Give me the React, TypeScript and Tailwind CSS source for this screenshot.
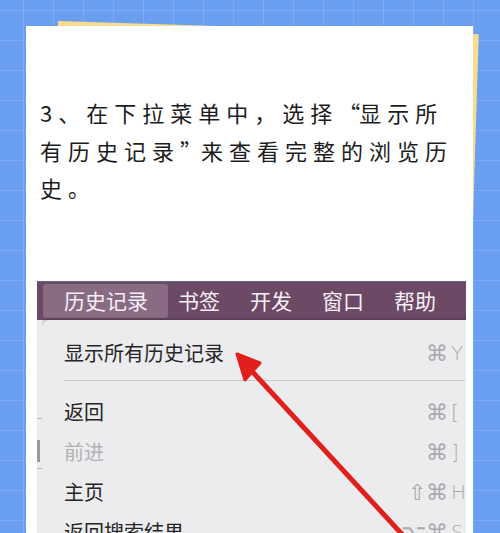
import React from 'react';

const cjk = "font-['Noto_Sans_CJK_SC',sans-serif]";

interface MenuRow {
  label: string;
  mods: string;
  key: string;
  dim?: boolean;
}

const rows: MenuRow[] = [
  { label: '返回', mods: '⌘', key: '[' },
  { label: '前进', mods: '⌘', key: ']', dim: true },
  { label: '主页', mods: '⇧⌘', key: 'H' },
  { label: '返回搜索结果', mods: '⌥⌘', key: 'S' },
];

const Shortcut: React.FC<{ mods: string; k: string }> = ({ mods, k }) => (
  <span className="ml-auto flex items-center font-['DejaVu_Sans',sans-serif] font-light text-[#a9a9ab]">
    <span className="text-[22px]">{mods}</span>
    <span className="w-[17px] pl-[3px] text-[20px]">{k}</span>
  </span>
);

export default function App() {
  return (
    <div className="relative h-[533px] w-[500px] overflow-hidden bg-[#699ef1] pl-[26px] pt-[26px] [background-image:linear-gradient(to_right,rgba(255,255,255,0.13)_1px,transparent_1px),linear-gradient(to_bottom,rgba(255,255,255,0.13)_1px,transparent_1px)] [background-size:30px_30px] [background-position:23px_10px]">
      {/* yellow sheet behind the card */}
      <div className="absolute left-[58px] top-[21px] h-[600px] w-[421px] origin-top-left rotate-[1.8deg] bg-[#f9dc8d]" />

      {/* card */}
      <div className="relative h-[600px] w-[447px] bg-white pl-[14px] pt-[68px]">
        <p className={`${cjk} w-[420px] text-[22px] leading-[37.5px] tracking-[6px] text-[#1c1c1c]`}>
          3、在下拉菜单中，选择<span className="tracking-[-1px]">“</span>显示所有历史记录<span className="tracking-[-1px]">”</span>来查看完整的浏览历史。
        </p>

        {/* screenshot */}
        <div className="relative -ml-[3px] mt-[74.5px] h-[260px] w-[429px] overflow-hidden bg-[#e6e6e8]">
          {/* menu bar */}
          <div className={`${cjk} flex h-[39px] items-center border-t border-[#5b6794] bg-[#6c4a66] pl-[6px] text-[21px] text-[#f6eff5]`}>
            <div className="flex h-[34px] w-[125px] items-center rounded-[3px] bg-[#896b84] pl-[21px]">历史记录</div>
            <span className="ml-[10px]">书签</span>
            <span className="ml-[30px]">开发</span>
            <span className="ml-[30px]">窗口</span>
            <span className="ml-[30px]">帮助</span>
          </div>

          <div className="flex">
            {/* page strip left of the menu */}
            <div className="relative w-[5px] bg-[#ececed]">
              <div className="absolute left-0 top-[98px] h-[1px] w-[5px] bg-[#b5b5b5]" />
              <div className="absolute left-0 top-[120px] h-[22px] w-[3px] bg-[#9a9a9a]" />
              <div className="absolute left-0 top-[148px] h-[1px] w-[5px] bg-[#b5b5b5]" />
            </div>

            {/* dropdown */}
            <div className={`${cjk} flex-1 rounded-tl-[7px] bg-[#ececee] pl-[22px] pr-[1px] pt-[13px] text-[20px] text-[#262626] shadow-[0_-1px_3px_rgba(0,0,0,0.25)]`}>
              <div className="flex h-[40px] items-center">
                <span>显示所有历史记录</span>
                <Shortcut mods="⌘" k="Y" />
              </div>
              <div className="mb-[11px] mt-[7px] border-t border-[#c9c9cb]" />
              {rows.map((row) => (
                <div key={row.label} className="flex h-[40px] items-center">
                  <span className={row.dim ? 'text-[#b3b3b5]' : ''}>{row.label}</span>
                  <Shortcut mods={row.mods} k={row.key} />
                </div>
              ))}
            </div>
          </div>

          {/* red arrow */}
          <svg className="absolute left-0 top-0" width="429" height="260" viewBox="0 0 429 260">
            <line x1="212" y1="87" x2="385" y2="275" stroke="#e1201e" strokeWidth="5" strokeLinecap="round" />
            <polygon points="200,73 223,82 208,99" fill="#e1201e" stroke="#e1201e" strokeWidth="3" strokeLinejoin="round" />
          </svg>
        </div>
      </div>
    </div>
  );
}
